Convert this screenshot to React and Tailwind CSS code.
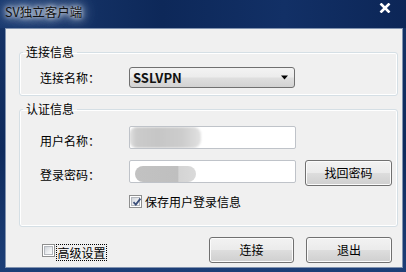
const btn =
  'h-[26px] rounded-[3px] border border-[#707070] bg-[linear-gradient(180deg,#f2f2f2_0%,#ebebeb_48%,#dddddd_52%,#cfcfcf_100%)] shadow-[inset_0_0_0_1px_#fbfbfb] flex items-center justify-center text-[12px] leading-none';

const CheckBox = ({ checked }) => (
  <div className="w-[13px] h-[13px] border border-[#8e8f8f] bg-white p-[1px] shrink-0">
    <div className="relative w-full h-full border border-[#b4b8be] bg-[linear-gradient(135deg,#d0d4da_0%,#eef0f2_60%,#fafafa_100%)]">
      {checked && (
        <svg className="absolute left-[0px] top-[-1px]" width="10" height="10" viewBox="0 0 10 10">
          <path d="M1.5 5.2 L3.8 7.6 L8.4 1.6" fill="none" stroke="#3b4f7a" strokeWidth="1.8" />
        </svg>
      )}
    </div>
  </div>
);

const Label = ({ children, className = '' }) => (
  <div className={`w-[89px] shrink-0 text-[12px] ${className}`}>{children}</div>
);

export default function App() {
  return (
    <div className="w-[406px] h-[272px] flex flex-col bg-[linear-gradient(180deg,#163468_0%,#0e2a5c_55%,#1d3f78_100%)] font-['Noto_Sans_CJK_SC',sans-serif] text-black">
      {/* title bar */}
      <div className="h-[28px] shrink-0 flex items-start justify-between pl-[5px] pr-[15px] bg-[linear-gradient(90deg,#1a3a70_0%,#0d2859_40%,#123066_70%,#0c2657_100%)]">
        <div className="mt-[5px] text-[12.5px] leading-[14px] text-[#111] [text-shadow:0_0_4px_#fff,0_0_8px_#e6edf5,0_0_14px_#b8c8dc,0_0_18px_#9fb3cf]">
          SV独立客户端
        </div>
        <svg className="mt-[3px]" width="12" height="10" viewBox="0 0 12 10">
          <path d="M1.5 0.5 L10.5 9.5 M10.5 0.5 L1.5 9.5" stroke="#fff" strokeWidth="2.6" />
        </svg>
      </div>

      {/* client area */}
      <div className="flex-1 ml-[5px] mr-[3px] mb-[4px] border border-[#8193b0] bg-[#f0f0f0] flex flex-col">
        <fieldset className="mt-[16px] ml-[13px] mr-[4px] border border-[#d5dfe5] rounded-[3px] pb-[7px] shadow-[inset_0_0_0_1px_#fff]">
          <legend className="ml-[3px] px-[3px] text-[12px] leading-[14px]">连接信息</legend>
          <div className="mt-[8px] pl-[20px] flex items-center">
            <Label>连接名称：</Label>
            <div className="w-[166px] h-[21px] rounded-[3px] border border-[#707070] bg-[linear-gradient(180deg,#f3f3f3_0%,#ececec_45%,#dedede_55%,#d2d2d2_100%)] flex items-center justify-between pl-[3px] pr-[6px]">
              <span className="text-[13px] font-semibold leading-none text-[#111]">SSLVPN</span>
              <svg width="7" height="5" viewBox="0 0 7 5">
                <path d="M0 0.5 H7 L3.5 4.5 Z" fill="#000" />
              </svg>
            </div>
          </div>
        </fieldset>

        <fieldset className="mt-[6px] ml-[13px] mr-[4px] border border-[#d5dfe5] rounded-[3px] pb-[18px] shadow-[inset_0_0_0_1px_#fff]">
          <legend className="ml-[3px] px-[3px] text-[12px] leading-[14px]">认证信息</legend>
          <div className="mt-[10px] pl-[20px] flex items-start">
            <Label className="mt-[3px] leading-[23px]">用户名称：</Label>
            <div className="w-[167px] h-[23px] rounded-[2px] border border-[#bfc3c9] bg-white flex items-center overflow-hidden">
              <div className="ml-[-1px] w-[72px] h-[21px] rounded-[8px] bg-[linear-gradient(90deg,#e4e4e4_0%,#cbcbcb_10%,#c6c6c6_40%,#cdcdcd_75%,#e2e2e2_100%)] blur-[1px]" />
            </div>
          </div>
          <div className="mt-[8px] pl-[20px] flex items-start">
            <Label className="mt-[3px] leading-[23px]">登录密码：</Label>
            <div className="w-[167px] h-[23px] rounded-[2px] border border-[#bfc3c9] bg-white flex items-start">
              <div className="ml-[5px] mt-[5px] w-[61px] h-[16px] rounded-full bg-[linear-gradient(90deg,#c2c2c2_0%,#bfbfbf_70%,#d4d4d4_72%,#dadada_100%)] blur-[0.6px]" />
            </div>
            <div className={`ml-[9px] w-[87px] ${btn}`}>找回密码</div>
          </div>
          <div className="mt-[9px] pl-[129px] flex items-center h-[13px] ml-[-20px]">
            <CheckBox checked />
            <span className="ml-[3px] text-[12px] leading-none">保存用户登录信息</span>
          </div>
        </fieldset>

        <div className="mt-[10px] flex items-start pl-[36px] pr-[10px]">
          <div className="mt-[7px]">
            <CheckBox />
          </div>
          <div className="mt-[7px] ml-[1px] w-[51px] h-[17px] border border-dotted border-black flex items-center justify-center text-[12px] leading-none">
            高级设置
          </div>
          <div
            className={`ml-auto w-[85px] ${btn} border-[#3c7fb1] bg-[linear-gradient(180deg,#f0f3f5_0%,#e6ebee_48%,#d8dde0_52%,#cdd3d7_100%)] shadow-[inset_0_0_0_1px_#9fd6f3,inset_0_0_2px_2px_#d6eefb]`}
          >
            连接
          </div>
          <div className={`ml-[12px] w-[86px] ${btn}`}>退出</div>
        </div>
      </div>
    </div>
  );
}
